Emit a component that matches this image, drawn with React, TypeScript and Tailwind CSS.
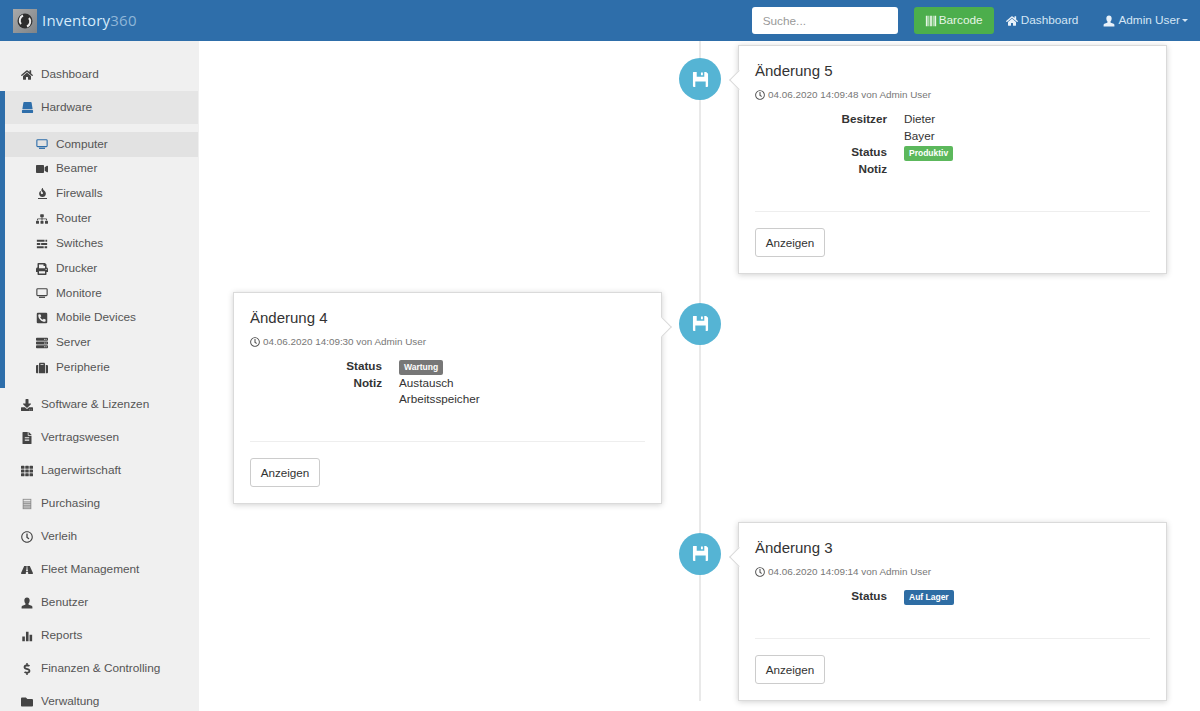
import React from "react";
import {
  FaHome,
  FaVideo,
  FaSitemap,
  FaPrint,
  FaPhoneSquareAlt,
  FaServer,
  FaSuitcase,
  FaDownload,
  FaFileAlt,
  FaTh,
  FaRegClock,
  FaRoad,
  FaDollarSign,
  FaFolder,
  FaFire,
} from "react-icons/fa";

type IconProps = { className?: string };

const UserIcon = ({ className }: IconProps) => (
  <svg viewBox="0 0 14 14" className={className} fill="currentColor">
    <path d="M7 .5c2 0 3.1 1.5 3.1 3.4 0 1.600-.6 3-1.300 3.800-.3.4-.2 1 .3 1.200l3.300 1.300c.6.3.9.8.9 1.400V13.500H.7V11.600c0-.6.3-1.100.9-1.400l3.300-1.300c.5-.2.6-.8.3-1.200C4.500 6.900 3.900 5.500 3.900 3.900 3.900 2 5 .5 7 .5z" />
  </svg>
);

const HddIcon = ({ className }: IconProps) => (
  <svg viewBox="0 0 14 14" className={className} fill="currentColor">
    <path d="M3.500 1h7c.5 0 .8.3.9.7l1.100 6.800h-11l1.100-6.800c.1-.4.400-.7.900-.7z" />
    <rect x="1" y="9.500" width="12" height="3.500" rx="1" />
  </svg>
);

const MonitorIcon = ({ className }: IconProps) => (
  <svg viewBox="0 0 14 14" className={className} fill="none" stroke="currentColor">
    <rect x="1" y="2" width="12" height="8" rx="1" strokeWidth="1.300" />
    <path d="M3.500 12h7" strokeWidth="1.500" />
  </svg>
);

const FireLineIcon = ({ className }: IconProps) => (
  <span className={`flex flex-col items-center ${className ?? ""}`}>
    <FaFire className="h-[9px] w-[9px]" />
    <span className="mt-px h-px w-[9px] bg-current" />
  </span>
);

const SwitchIcon = ({ className }: IconProps) => (
  <svg viewBox="0 0 14 14" className={className} fill="currentColor">
    <path d="M1 2h9v2.500H1zM11 2h2v2.500h-2zM1 5.800h4v2.500H1zM6 5.800h7v2.500H6zM1 9.600h8v2.500H1zM10 9.600h3v2.500h-3z" />
  </svg>
);

const ListIcon = ({ className }: IconProps) => (
  <svg viewBox="0 0 14 14" className={className}>
    <rect x="2" y="1" width="10" height="12" fill="#8a8a8a" />
    <rect x="3" y="2" width="8" height="2" fill="#e8e8e8" />
    <path d="M3 5.500h8M3 7.500h8M3 9.500h8M3 11.500h8" stroke="#d5d5d5" strokeWidth="1" />
  </svg>
);

const StatsIcon = ({ className }: IconProps) => (
  <svg viewBox="0 0 14 14" className={className} fill="currentColor">
    <path d="M1.500 7.500h3V13h-3zM5.800 2h3v11h-3zM10 5.500h3V13h-3z" />
  </svg>
);

const BarcodeIcon = ({ className }: IconProps) => (
  <svg viewBox="0 0 14 14" className={className} fill="currentColor">
    <path d="M1 1h2v12H1zM4 1h1v12H4zM6 1h2v12H6zM9 1h1v12H9zM11 1h2v12h-2z" />
  </svg>
);

const DiskIcon = ({ className }: IconProps) => (
  <svg viewBox="0 0 18 18" className={className} fill="currentColor">
    <path
      fillRule="evenodd"
      d="M1.500 1H5v5h8V1h2l2 2v13c0 .6-.4 1-1 1h-1.500v-6h-11v6H2c-.6 0-1-.4-1-1V1.500c0-.3.2-.5.500-.5zM9.500 1.500h2v3h-2z"
    />
  </svg>
);

const LogoIcon = () => (
  <svg viewBox="0 0 24 24" className="h-6 w-6">
    <defs>
      <linearGradient id="logoBg" x1="0" y1="0" x2="1" y2="1">
        <stop offset="0" stopColor="#a9a9a9" />
        <stop offset="1" stopColor="#7f8488" />
      </linearGradient>
    </defs>
    <rect width="24" height="24" fill="url(#logoBg)" />
    <circle cx="12" cy="12" r="7.500" fill="#2e2e2e" />
    <path d="M8 15a5.500 5.500 0 0 1 2-8.500" stroke="#eee" strokeWidth="2" fill="none" />
    <path d="M16 9a5.500 5.500 0 0 1-2 8.500" stroke="#eee" strokeWidth="2" fill="none" />
  </svg>
);

const subItems: { label: string; icon: React.ComponentType<IconProps>; active?: boolean }[] = [
  { label: "Computer", icon: MonitorIcon, active: true },
  { label: "Beamer", icon: FaVideo },
  { label: "Firewalls", icon: FireLineIcon },
  { label: "Router", icon: FaSitemap },
  { label: "Switches", icon: SwitchIcon },
  { label: "Drucker", icon: FaPrint },
  { label: "Monitore", icon: MonitorIcon },
  { label: "Mobile Devices", icon: FaPhoneSquareAlt },
  { label: "Server", icon: FaServer },
  { label: "Peripherie", icon: FaSuitcase },
];

const mainItems: { label: string; icon: React.ComponentType<IconProps> }[] = [
  { label: "Software & Lizenzen", icon: FaDownload },
  { label: "Vertragswesen", icon: FaFileAlt },
  { label: "Lagerwirtschaft", icon: FaTh },
  { label: "Purchasing", icon: ListIcon },
  { label: "Verleih", icon: FaRegClock },
  { label: "Fleet Management", icon: FaRoad },
  { label: "Benutzer", icon: UserIcon },
  { label: "Reports", icon: StatsIcon },
  { label: "Finanzen & Controlling", icon: FaDollarSign },
  { label: "Verwaltung", icon: FaFolder },
];

const NavRow = ({ label, icon: Icon }: { label: string; icon: React.ComponentType<IconProps> }) => (
  <div className="flex h-[33px] shrink-0 items-center pl-[21px] text-[#555]">
    <span className="flex w-[20px] shrink-0">
      <Icon className="h-3 w-3 text-[#444]" />
    </span>
    {label}
  </div>
);

const Sidebar = () => (
  <aside className="flex h-[670px] w-[199px] shrink-0 flex-col overflow-hidden bg-[#f0f0f0] pt-[17px] text-[11.8px]">
    <NavRow label="Dashboard" icon={FaHome} />
    <div className="border-l-[5px] border-[#2e6eaa] pb-2">
      <div className="mr-px flex h-[33px] items-center bg-[#e5e5e5] pl-[16px] text-[#555]">
        <span className="flex w-[20px] shrink-0">
          <HddIcon className="h-[13px] w-[13px] text-[#2e6eaa]" />
        </span>
        Hardware
      </div>
      <ul className="mt-2">
        {subItems.map(({ label, icon: Icon, active }) => (
          <li
            key={label}
            className={`mr-px flex h-[24.85px] items-center pl-[31px] text-[#555] ${active ? "bg-[#e2e2e2]" : ""}`}
          >
            <span className="flex w-[20px] shrink-0">
              <Icon className={`h-3 w-3 ${active ? "text-[#2e6eaa]" : "text-[#444]"}`} />
            </span>
            {label}
          </li>
        ))}
      </ul>
    </div>
    {mainItems.map((item) => (
      <NavRow key={item.label} {...item} />
    ))}
  </aside>
);

const Header = () => (
  <header className="flex h-[41px] shrink-0 items-center bg-[#2e6eaa] pl-[13px] text-[11.8px] text-[#d4e6f5]">
    <LogoIcon />
    <span className="ml-[5px] font-['Open_Sans',sans-serif] text-[15px] tracking-[0.2px] text-[#d6ebfa]">
      Inventory<span className="text-[#8fb6d8]">360</span>
    </span>
    <input
      placeholder="Suche..."
      className="ml-auto h-[27px] w-[146px] rounded-[3px] bg-white px-[11px] text-[11.8px] placeholder:text-[#999]"
    />
    <button className="ml-4 flex h-[27px] w-[80px] items-center justify-center gap-[2px] rounded-[3px] bg-[#4cae4c] text-[#e6f5e6]">
      <BarcodeIcon className="h-3 w-3" />
      Barcode
    </button>
    <span className="ml-3 flex items-center gap-[3px]">
      <FaHome className="h-3 w-3 text-[#e8f1f9]" />
      Dashboard
    </span>
    <span className="ml-[25px] mr-3 flex items-center gap-[3px]">
      <UserIcon className="h-3 w-3 text-[#e8f1f9]" />
      Admin User
      <span className="ml-[-1px] h-0 w-0 border-x-[3px] border-t-[3px] border-x-transparent border-t-[#d4e6f5]" />
    </span>
  </header>
);

type Field = { name: string; value: React.ReactNode };

const Badge = ({ className, children }: { className: string; children: React.ReactNode }) => (
  <span className={`inline-block whitespace-nowrap rounded-[2px] px-[5px] py-px text-[8.5px] font-bold leading-[13px] text-white ${className}`}>
    {children}
  </span>
);

const Card = ({ title, date, fields, side }: { title: string; date: string; fields: Field[]; side: "left" | "right" }) => (
  <div className="relative border border-[#dadada] bg-white px-4 pb-4 pt-4 shadow-[0_1px_6px_rgba(0,0,0,0.18)]">
    <span
      className={`absolute top-[27px] h-[14px] w-[14px] rotate-45 bg-white ${
        side === "right"
          ? "left-[-7.500px] border-b border-l border-[#dadada]"
          : "right-[-7.500px] border-r border-t border-[#dadada]"
      }`}
    />
    <h3 className="text-[15px] leading-[17px] text-[#333]">{title}</h3>
    <p className="mt-[9px] flex items-center gap-[3px] text-[9.9px] leading-[14px] text-[#777]">
      <FaRegClock className="h-[10px] w-[10px] text-[#555]" />
      {date}
    </p>
    <dl className="mt-[9px] grid grid-cols-[132px_auto] justify-start gap-x-[17px] text-[11.7px] leading-[16.6px] text-[#333]">
      {fields.map((f) => (
        <React.Fragment key={f.name}>
          <dt className="text-right font-bold">{f.name}</dt>
          <dd className="w-min">{f.value}</dd>
        </React.Fragment>
      ))}
    </dl>
    <hr className="mt-[33px] border-[#eeeeee]" />
    <button className="mt-4 h-[29px] w-[70px] rounded-[3px] border border-[#ccc] bg-white text-[11.7px] text-[#333]">
      Anzeigen
    </button>
  </div>
);

const Marker = () => (
  <div className="relative z-10 flex justify-center">
    <span className="flex h-[42px] w-[42px] items-center justify-center rounded-full bg-[#55b4d4] text-white">
      <DiskIcon className="h-[17px] w-[17px]" />
    </span>
  </div>
);

const Timeline = () => (
  <main className="h-[670px] flex-1 overflow-hidden bg-white pl-[34px] pt-1">
    <div className="relative grid grid-cols-[429px_76px_429px] gap-y-[18px]">
      <span className="absolute bottom-0 left-[466px] top-[-10px] w-[2px] bg-[#e9e9e9]" />

      <div />
      <div className="pt-[13px]">
        <Marker />
      </div>
      <Card
        side="right"
        title="Änderung 5"
        date="04.06.2020 14:09:48 von Admin User"
        fields={[
          { name: "Besitzer", value: "Dieter Bayer" },
          { name: "Status", value: <Badge className="bg-[#5cb85c]">Produktiv</Badge> },
          { name: "Notiz", value: "" },
        ]}
      />

      <Card
        side="left"
        title="Änderung 4"
        date="04.06.2020 14:09:30 von Admin User"
        fields={[
          { name: "Status", value: <Badge className="bg-[#777]">Wartung</Badge> },
          { name: "Notiz", value: "Austausch Arbeitsspeicher" },
        ]}
      />
      <div className="pt-[11px]">
        <Marker />
      </div>
      <div />

      <div />
      <div className="pt-[11px]">
        <Marker />
      </div>
      <Card
        side="right"
        title="Änderung 3"
        date="04.06.2020 14:09:14 von Admin User"
        fields={[{ name: "Status", value: <Badge className="bg-[#2e6da4]">Auf Lager</Badge> }]}
      />
    </div>
  </main>
);

const App: React.FC = () => {
  return (
    <div className="flex h-[711px] w-[1200px] flex-col overflow-hidden bg-white font-['Liberation_Sans',Arial,sans-serif]">
      <Header />
      <div className="flex flex-1">
        <Sidebar />
        <Timeline />
      </div>
    </div>
  );
};

export default App;
